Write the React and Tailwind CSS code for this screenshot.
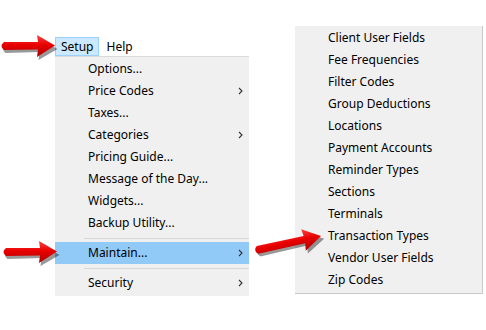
import React from 'react';

const mainItems = [
    { label: 'Options...' },
    { label: 'Price Codes', sub: true },
    { label: 'Taxes...' },
    { label: 'Categories', sub: true },
    { label: 'Pricing Guide...' },
    { label: 'Message of the Day...' },
    { label: 'Widgets...' },
    { label: 'Backup Utility...' },
    { sep: true },
    { label: 'Maintain...', sub: true, active: true },
    { sep: true },
    { label: 'Security', sub: true },
];

const maintainItems = [
    'Client User Fields',
    'Fee Frequencies',
    'Filter Codes',
    'Group Deductions',
    'Locations',
    'Payment Accounts',
    'Reminder Types',
    'Sections',
    'Terminals',
    'Transaction Types',
    'Vendor User Fields',
    'Zip Codes',
];

const Chevron = () => (
    <svg width="5" height="8" viewBox="0 0 5 8" className="shrink-0">
        <polyline points="1,1 4,4 1,7" fill="none" stroke="#333" strokeWidth="1.1" />
    </svg>
);

// red pointer arrow, drawn pointing right; tip sits at the right end
const Arrow = ({ className, len = 58 }) => {
    const tip = len - 2;
    const base = tip - 18;
    return (
        <svg width={len + 4} height="28" viewBox={`0 0 ${len + 4} 28`} className={className}>
            <defs>
                <linearGradient id="redArrow" x1="0" y1="0" x2="0" y2="1">
                    <stop offset="0" stopColor="#ff4040" />
                    <stop offset="0.45" stopColor="#e80000" />
                    <stop offset="1" stopColor="#b00000" />
                </linearGradient>
            </defs>
            <path
                d={`M5,10 Q0,14 5,18 L${base + 1},17 L${base},25 L${tip + 1},14 L${base},3 L${base + 1},10 Z`}
                fill="#000"
                opacity="0.4"
                transform="translate(1.5,2)"
            />
            <path
                d={`M5,9 Q0,13 5,17 L${base + 1},16.5 L${base},24 L${tip},12.5 L${base},2 L${base + 1},9 Z`}
                fill="url(#redArrow)"
            />
        </svg>
    );
};

export default function App() {
    return (
        <div
            className="relative w-[486px] h-[330px] overflow-hidden bg-white text-[12px] leading-none text-black"
            style={{ fontFamily: '"Noto Sans", "Open Sans", sans-serif' }}
        >
            {/* menu bar */}
            <div className="flex items-center pt-[37px] pl-[55px] h-[56px]">
                <div className="h-[19px] px-[5px] flex items-center bg-[#cce8ff] border border-[#99d1ff]">Setup</div>
                <div className="h-[19px] px-[7px] flex items-center">Help</div>
            </div>

            {/* setup dropdown */}
            <div className="absolute left-[55px] top-[56px] w-[194px] bg-[#f0f0f0] border-t border-[#d9d9d9] pt-px pb-[2px]">
                {mainItems.map((item, i) =>
                    item.sep ? (
                        <div key={i} className="h-[8px] flex items-center pl-[29px]">
                            <div className="h-px w-full bg-[#d7d7d7]" />
                        </div>
                    ) : (
                        <div
                            key={i}
                            className={`h-[22px] flex items-center justify-between pl-[33px] pr-[6px] ${item.active ? 'bg-[#91c9f7]' : ''}`}
                        >
                            <span>{item.label}</span>
                            {item.sub && <Chevron />}
                        </div>
                    )
                )}
            </div>

            {/* maintain submenu */}
            <div className="absolute left-[295px] top-[26px] w-[188px] bg-[#f0f0f0] border-r border-b border-[#c9c9c9] pt-px pb-[2px]">
                {maintainItems.map((label) => (
                    <div key={label} className="h-[22px] flex items-center pl-[33px]">
                        {label}
                    </div>
                ))}
            </div>

            {/* annotation arrows */}
            <Arrow className="absolute left-[-1px] top-[33px]" len={58} />
            <Arrow className="absolute left-[1px] top-[239px]" len={58} />
            <Arrow className="absolute left-[252px] top-[230px] -rotate-[12deg]" len={72} />
        </div>
    );
}
